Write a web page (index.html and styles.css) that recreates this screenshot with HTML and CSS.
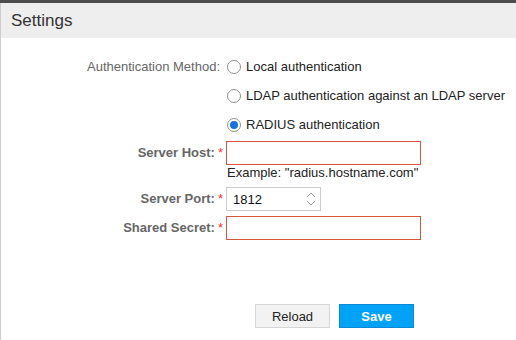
FILE: index.html
```html
<!DOCTYPE html>
<html lang="en">
<head>
    <meta charset="UTF-8">
    <meta name="viewport" content="width=device-width, initial-scale=1.0">
    <title>Settings</title>
    <link rel="stylesheet" href="styles.css">
</head>
<body>
    <div class="top-bar"></div>
    <div class="page">
        <header class="page-header">Settings</header>

        <form class="settings-form">
            <div class="form-row">
                <label class="field-label plain">Authentication Method:</label>
                <div class="radio-group">
                    <label class="radio-option"><input type="radio" name="auth" class="radio"> Local authentication</label>
                    <label class="radio-option"><input type="radio" name="auth" class="radio"> LDAP authentication against an LDAP server</label>
                    <label class="radio-option"><input type="radio" name="auth" class="radio" checked> RADIUS authentication</label>
                </div>
            </div>

            <div class="form-row host-row">
                <label class="field-label">Server Host:<span class="required">*</span></label>
                <div class="field">
                    <input type="text" class="text-input invalid wide">
                    <div class="hint">Example: "radius.hostname.com"</div>
                </div>
            </div>

            <div class="form-row port-row">
                <label class="field-label">Server Port:<span class="required">*</span></label>
                <div class="number-field">
                    <input type="text" class="number-input" value="1812">
                    <svg class="spinner" width="10" height="16" viewBox="0 0 10 16">
                        <path d="M1 6 L5 2 L9 6" fill="none" stroke="#a0a0a0" stroke-width="1"/>
                        <path d="M1 10 L5 14 L9 10" fill="none" stroke="#a0a0a0" stroke-width="1"/>
                    </svg>
                </div>
            </div>

            <div class="form-row secret-row">
                <label class="field-label">Shared Secret:<span class="required">*</span></label>
                <input type="password" class="text-input invalid wide">
            </div>

            <div class="actions">
                <button type="button" class="btn btn-default">Reload</button>
                <button type="button" class="btn btn-primary">Save</button>
            </div>
        </form>
    </div>
</body>
</html>
```

FILE: styles.css
```css
:root {
    --label-color: #666666;
    --text-color: #222222;
    --error-color: #d9553d;
    --border-color: #cccccc;
    --primary: #00a2f5;
}

* {
    box-sizing: border-box;
    margin: 0;
    padding: 0;
}

body {
    font-family: "Liberation Sans", Arial, sans-serif;
    font-size: 13px;
    color: var(--text-color);
    background: #ffffff;
    height: 340px;
    overflow: hidden;
}

.top-bar {
    height: 3px;
    background-color: #4d4d4d;
}

.page {
    border-left: 1px solid var(--border-color);
    height: 337px;
}

.page-header {
    height: 35px;
    line-height: 35px;
    padding-left: 10px;
    font-size: 17px;
    color: #333333;
    background-color: #eeeeee;
}

.settings-form {
    padding-top: 14px;
}

.form-row {
    display: grid;
    grid-template-columns: 222px 1fr;
    column-gap: 3px;
    align-items: start;
}

.field-label {
    text-align: right;
    color: var(--label-color);
    font-weight: 700;
    line-height: 24px;
    white-space: nowrap;
}

.field-label.plain {
    font-weight: 400;
    line-height: 29px;
    padding-right: 3px;
}

.required {
    color: #ee3333;
    font-weight: 400;
    margin-left: 3px;
}

.radio-group {
    display: flex;
    flex-direction: column;
}

.radio-option {
    display: flex;
    align-items: center;
    gap: 5px;
    height: 29px;
    color: var(--text-color);
}

.radio {
    appearance: none;
    width: 14px;
    height: 14px;
    border: 1px solid #8f8f8f;
    border-radius: 50%;
    background: #ffffff;
    margin-left: 1px;
    display: grid;
    place-items: center;
}

.radio:checked::after {
    content: '';
    width: 8px;
    height: 8px;
    border-radius: 50%;
    background-color: #1673d3;
}

.host-row {
    margin-top: 2px;
}

.text-input {
    height: 24px;
    border: 1px solid var(--border-color);
    font: inherit;
    padding: 0 6px;
    outline: none;
}

.text-input.invalid {
    border-color: var(--error-color);
}

.text-input.wide {
    width: 195px;
}

.hint {
    line-height: 16px;
    padding-left: 1px;
    color: var(--text-color);
}

.port-row {
    margin-top: 6px;
}

.number-field {
    display: flex;
    align-items: center;
    width: 95px;
    height: 24px;
    border: 1px solid var(--border-color);
}

.number-input {
    width: 70px;
    border: none;
    outline: none;
    font: inherit;
    color: #111111;
    padding-left: 6px;
}

.spinner {
    margin-left: 9px;
}

.secret-row {
    margin-top: 5px;
}

.actions {
    display: flex;
    gap: 9px;
    padding-left: 254px;
    margin-top: 64px;
}

.btn {
    width: 75px;
    height: 24px;
    font: inherit;
    cursor: pointer;
}

.btn-default {
    background-color: #f2f2f2;
    border: 1px solid #d6d6d6;
    color: var(--text-color);
}

.btn-primary {
    background-color: var(--primary);
    border: 1px solid #0a8ad6;
    color: #ffffff;
    font-weight: 700;
}
```
